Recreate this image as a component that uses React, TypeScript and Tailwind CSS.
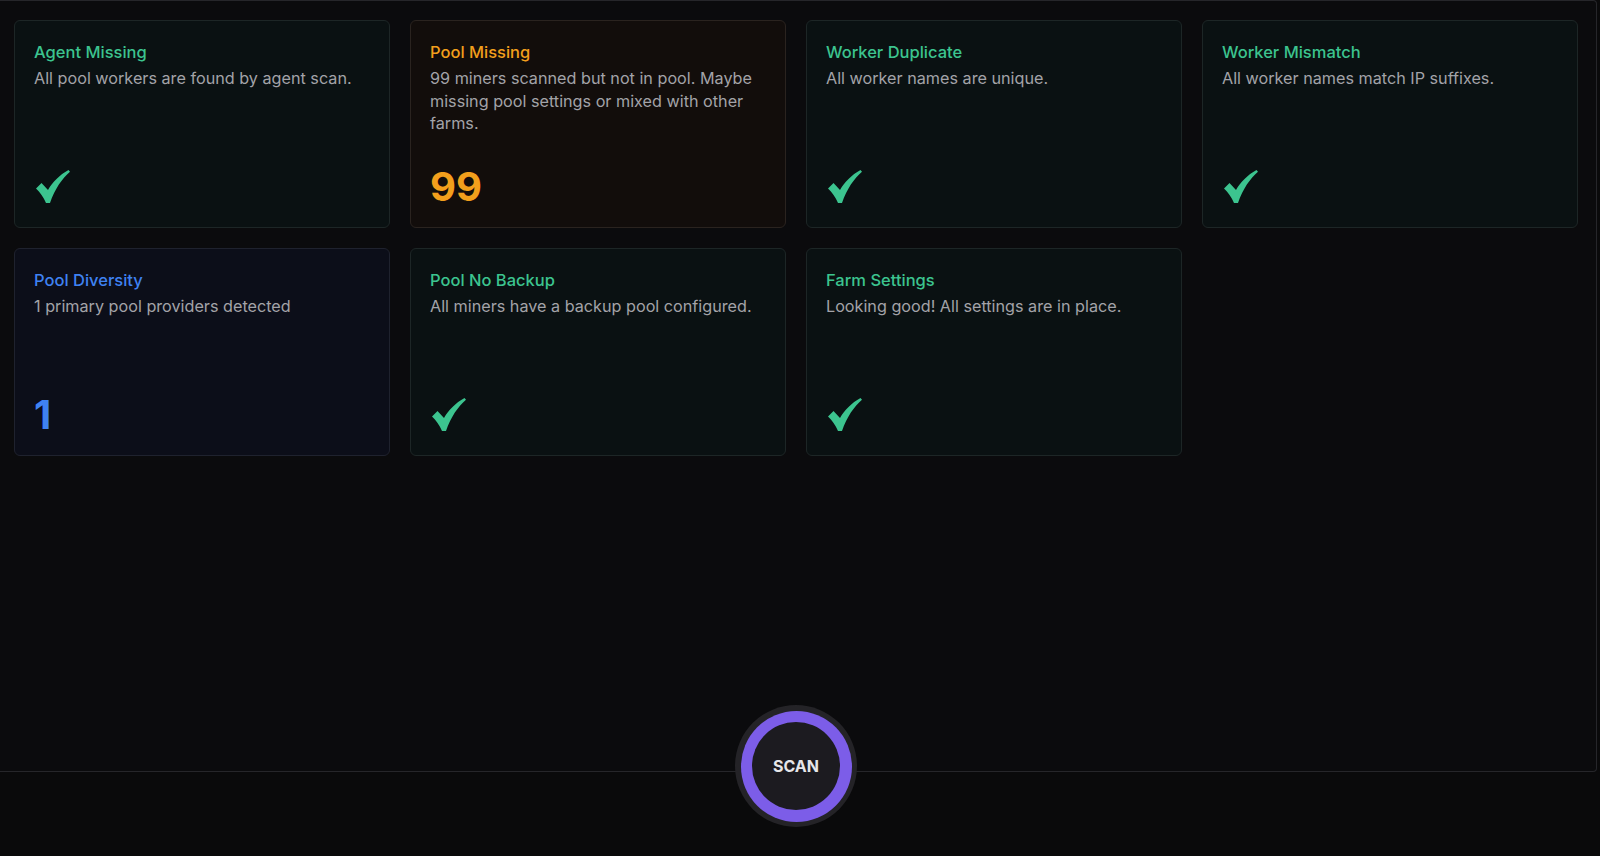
type Tone = "green" | "amber" | "blue";

interface Check {
  title: string;
  text: string;
  tone: Tone;
  value?: string;
}

const checks: Check[] = [
  { title: "Agent Missing", text: "All pool workers are found by agent scan.", tone: "green" },
  {
    title: "Pool Missing",
    text: "99 miners scanned but not in pool. Maybe missing pool settings or mixed with other farms.",
    tone: "amber",
    value: "99",
  },
  { title: "Worker Duplicate", text: "All worker names are unique.", tone: "green" },
  { title: "Worker Mismatch", text: "All worker names match IP suffixes.", tone: "green" },
  { title: "Pool Diversity", text: "1 primary pool providers detected", tone: "blue", value: "1" },
  { title: "Pool No Backup", text: "All miners have a backup pool configured.", tone: "green" },
  { title: "Farm Settings", text: "Looking good! All settings are in place.", tone: "green" },
];

const toneStyles: Record<Tone, { card: string; title: string }> = {
  green: {
    card: "bg-[#0a1112] border-[#1d2626]",
    title: "text-[#3cc48f]",
  },
  amber: {
    card: "bg-[#120d0b] border-[#2a231f]",
    title: "text-[#f29f1c]",
  },
  blue: {
    card: "bg-[#0c0e19] border-[#1f222e]",
    title: "text-[#3f82f2]",
  },
};

const CheckMark = () => (
  <svg width="34" height="34" viewBox="0 0 34 34" className="ml-[2px]">
    <path
      d="M0 18.5 L5.5 13 L12 20 C16.5 12 23.5 5 32.5 0 L34 1.8 C26 8.5 19 19 14 33 L10 33 C7.5 27 4 22.5 0 18.5 Z"
      fill="#3cc48f"
    />
  </svg>
);

const CheckCard = ({ check }: { check: Check }) => {
  const tone = toneStyles[check.tone];
  return (
    <div
      className={`flex h-[208px] flex-col rounded-md border px-[19px] pt-[19px] pb-5 ${tone.card}`}
    >
      <h3 className={`text-[16.5px] leading-6 font-medium ${tone.title}`}>
        {check.title}
      </h3>
      <p className="mt-[3px] text-[16.2px] leading-[22.7px] text-[#a3a3a8]">
        {check.text}
      </p>
      <div className="mt-auto flex h-10 items-center">
        {check.value ? (
          <span className={`text-[40px] leading-10 font-bold ${tone.title}`}>
            {check.value}
          </span>
        ) : (
          <CheckMark />
        )}
      </div>
    </div>
  );
};

export default function App() {
  return (
    <div
      className="h-[856px] w-full overflow-hidden bg-[#0a0a0b]"
      style={{ fontFamily: "Inter, 'Noto Sans', sans-serif" }}
    >
      <div className="relative h-[772px] w-[1597px] rounded-r-[4px] border border-l-0 border-[#26262a] bg-[#0b0b0d] pt-[19px] pr-[18px] pl-[14px]">
        <div className="grid grid-cols-4 gap-x-5 gap-y-5">
          {checks.map((c) => (
            <CheckCard key={c.title} check={c} />
          ))}
        </div>

        <button className="absolute left-[796px] -bottom-[56px] flex h-[122px] w-[122px] -translate-x-1/2 items-center justify-center rounded-full bg-[#242327]">
          <span className="flex h-[111px] w-[111px] items-center justify-center rounded-full bg-[#7c5de8]">
            <span className="flex h-[88px] w-[88px] items-center justify-center rounded-full bg-[#1c1b20] text-base font-bold text-[#e6e6e9]">
              SCAN
            </span>
          </span>
        </button>
      </div>
    </div>
  );
}
